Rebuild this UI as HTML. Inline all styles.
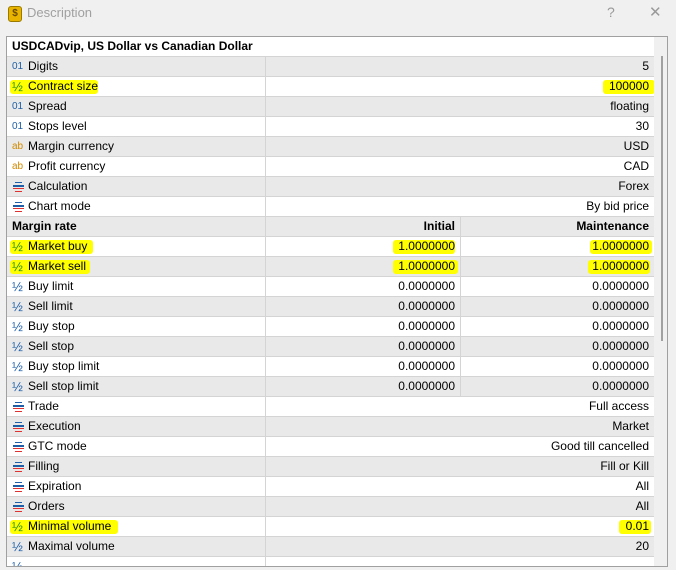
<!DOCTYPE html><html><head><style>
body{margin:0;width:676px;height:570px;background:#f0f0f0;font-family:"Liberation Sans",Tahoma,sans-serif;font-size:12px;color:#000;position:relative;overflow:hidden}
.title{position:absolute;left:27px;top:5px;font-size:13px;color:#a0a0a0}
.ico{position:absolute;left:8px;top:6px;width:12px;height:14px;background:#e8b400;border:1px solid #9a7a00;border-radius:3px;color:#6a4a00;font-size:10px;font-weight:bold;text-align:center;line-height:14px}
.q{position:absolute;left:607px;top:4px;color:#999;font-size:14px}
.x{position:absolute;left:649px;top:3px;color:#999;font-size:15px}
.panel{position:absolute;left:6px;top:36px;width:660px;height:529px;border:1px solid #a0a0a0;background:#fff;overflow:hidden}
.sb{position:absolute;left:647px;top:0;width:13px;height:529px;background:#f0f0f0}
.thumb{position:absolute;left:654px;top:19px;width:2px;height:285px;background:#a0a0a0}
.r{position:absolute;left:0;width:647px;height:19px;border-bottom:1px solid #d4d4d4;line-height:19px}
.g{background:#e9e9e9}
.n{position:absolute;left:21px;white-space:nowrap}
.c1{position:absolute;left:258px;top:0;width:1px;height:19px;background:#d4d4d4}
.c2{position:absolute;left:453px;top:0;width:1px;height:19px;background:#d4d4d4}
.v{position:absolute;right:5px}
.v1{position:absolute;right:199px}
.i{position:absolute;left:5px;top:0;font-size:10px}
.b{color:#1e5fa8}.o{color:#d08a00}
.h{position:absolute;left:5px;font-weight:bold}
.hl{position:absolute;background:#ffff00;border-radius:3px;height:14px;top:3px}
.lst{position:absolute;left:6px;top:5px;width:11px;height:10px}
.lst:before{content:"";position:absolute;left:0;top:0;width:11px;height:10px;background:linear-gradient(to right,transparent 2px,#1e5fa8 2px 9px,transparent 9px) 0 0/11px 1px no-repeat,linear-gradient(#1e5fa8,#1e5fa8) 0 3px/11px 2px no-repeat,linear-gradient(#e03030,#e03030) 0 6px/11px 1px no-repeat,linear-gradient(to right,transparent 2px,#e03030 2px 9px,transparent 9px) 0 9px/11px 1px no-repeat}
.hf{position:absolute;left:5px;top:0;font-size:13px;color:#1e5fa8}
.hf.gr{color:#208a20}
</style></head><body>
<div class="ico">$</div><div class="title">Description</div><div class="q">?</div><div class="x">✕</div>
<div class="panel">
<div class="r" style="top:0"><span class="h">USDCADvip, US Dollar vs Canadian Dollar</span></div>
<div class="r g" style="top:20px"><span class="i b">01</span><span class="n">Digits</span><i class="c1"></i><span class="v">5</span></div>
<div class="r" style="top:40px"><div class="hl" style="left:3px;width:88px"></div><div class="hl" style="left:596px;width:52px"></div><span class="hf gr">½</span><span class="n">Contract size</span><i class="c1"></i><span class="v">100000</span></div>
<div class="r g" style="top:60px"><span class="i b">01</span><span class="n">Spread</span><i class="c1"></i><span class="v">floating</span></div>
<div class="r" style="top:80px"><span class="i b">01</span><span class="n">Stops level</span><i class="c1"></i><span class="v">30</span></div>
<div class="r g" style="top:100px"><span class="i o">ab</span><span class="n">Margin currency</span><i class="c1"></i><span class="v">USD</span></div>
<div class="r" style="top:120px"><span class="i o">ab</span><span class="n">Profit currency</span><i class="c1"></i><span class="v">CAD</span></div>
<div class="r g" style="top:140px"><i class="lst"></i><span class="n">Calculation</span><i class="c1"></i><span class="v">Forex</span></div>
<div class="r" style="top:160px"><i class="lst"></i><span class="n">Chart mode</span><i class="c1"></i><span class="v">By bid price</span></div>
<div class="r g" style="top:180px"><span class="h">Margin rate</span><i class="c1"></i><i class="c2"></i><b class="v1">Initial</b><b class="v">Maintenance</b></div>
<div class="r" style="top:200px"><div class="hl" style="left:3px;width:83px"></div><div class="hl" style="left:386px;width:62px"></div><div class="hl" style="left:583px;width:62px"></div><span class="hf gr">½</span><span class="n">Market buy</span><i class="c1"></i><i class="c2"></i><span class="v1">1.0000000</span><span class="v">1.0000000</span></div>
<div class="r g" style="top:220px"><div class="hl" style="left:3px;width:80px"></div><div class="hl" style="left:386px;width:65px"></div><div class="hl" style="left:581px;width:62px"></div><span class="hf gr">½</span><span class="n">Market sell</span><i class="c1"></i><i class="c2"></i><span class="v1">1.0000000</span><span class="v">1.0000000</span></div>
<div class="r" style="top:240px"><span class="hf">½</span><span class="n">Buy limit</span><i class="c1"></i><i class="c2"></i><span class="v1">0.0000000</span><span class="v">0.0000000</span></div>
<div class="r g" style="top:260px"><span class="hf">½</span><span class="n">Sell limit</span><i class="c1"></i><i class="c2"></i><span class="v1">0.0000000</span><span class="v">0.0000000</span></div>
<div class="r" style="top:280px"><span class="hf">½</span><span class="n">Buy stop</span><i class="c1"></i><i class="c2"></i><span class="v1">0.0000000</span><span class="v">0.0000000</span></div>
<div class="r g" style="top:300px"><span class="hf">½</span><span class="n">Sell stop</span><i class="c1"></i><i class="c2"></i><span class="v1">0.0000000</span><span class="v">0.0000000</span></div>
<div class="r" style="top:320px"><span class="hf">½</span><span class="n">Buy stop limit</span><i class="c1"></i><i class="c2"></i><span class="v1">0.0000000</span><span class="v">0.0000000</span></div>
<div class="r g" style="top:340px"><span class="hf">½</span><span class="n">Sell stop limit</span><i class="c1"></i><i class="c2"></i><span class="v1">0.0000000</span><span class="v">0.0000000</span></div>
<div class="r" style="top:360px"><i class="lst"></i><span class="n">Trade</span><i class="c1"></i><span class="v">Full access</span></div>
<div class="r g" style="top:380px"><i class="lst"></i><span class="n">Execution</span><i class="c1"></i><span class="v">Market</span></div>
<div class="r" style="top:400px"><i class="lst"></i><span class="n">GTC mode</span><i class="c1"></i><span class="v">Good till cancelled</span></div>
<div class="r g" style="top:420px"><i class="lst"></i><span class="n">Filling</span><i class="c1"></i><span class="v">Fill or Kill</span></div>
<div class="r" style="top:440px"><i class="lst"></i><span class="n">Expiration</span><i class="c1"></i><span class="v">All</span></div>
<div class="r g" style="top:460px"><i class="lst"></i><span class="n">Orders</span><i class="c1"></i><span class="v">All</span></div>
<div class="r" style="top:480px"><div class="hl" style="left:3px;width:108px"></div><div class="hl" style="left:612px;width:32px"></div><span class="hf gr">½</span><span class="n">Minimal volume</span><i class="c1"></i><span class="v">0.01</span></div>
<div class="r g" style="top:500px"><span class="hf">½</span><span class="n">Maximal volume</span><i class="c1"></i><span class="v">20</span></div>
<div class="r" style="top:520px"><span class="hf">½</span><i class="c1"></i></div>
<div class="sb"></div><div class="thumb"></div>
</div>
</body></html>
